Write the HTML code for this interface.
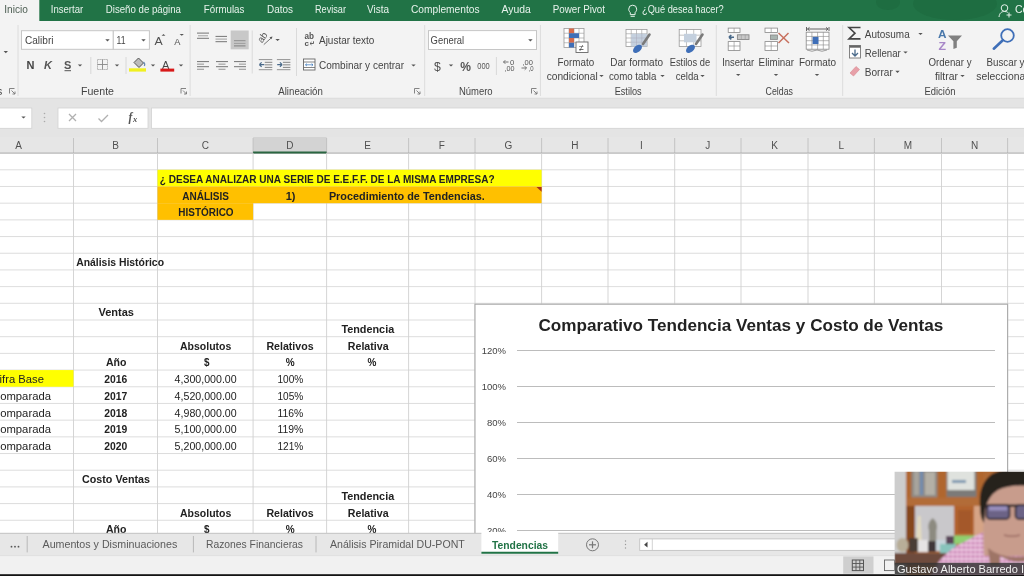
<!DOCTYPE html>
<html><head><meta charset="utf-8"><title>Excel - Tendencias</title>
<style>
html,body{margin:0;padding:0;width:1024px;height:576px;overflow:hidden;background:#fff}
svg{display:block;font-family:"Liberation Sans",sans-serif;will-change:transform}
</style></head><body>
<svg width="1024" height="576" viewBox="0 0 1024 576">
<rect x="0.00" y="0.00" width="1024.00" height="576.00" fill="#ffffff" />
<rect x="0.00" y="0.00" width="1024.00" height="21.00" fill="#217346" />
<rect x="0.00" y="0.00" width="39.30" height="21.00" fill="#f3f3f3" />
<ellipse cx="955" cy="4" rx="42" ry="16" fill="#1e6b40" opacity="0.8"/>
<ellipse cx="888" cy="2" rx="12" ry="8" fill="#1e6b40" opacity="0.8"/>
<text x="4.30" y="12.80" font-size="10.5" fill="#4d5e53" textLength="23.60" lengthAdjust="spacingAndGlyphs">Inicio</text>
<text x="50.80" y="12.80" font-size="10.5" fill="#e8f3ec" textLength="32.40" lengthAdjust="spacingAndGlyphs">Insertar</text>
<text x="105.80" y="12.80" font-size="10.5" fill="#e8f3ec" textLength="75.20" lengthAdjust="spacingAndGlyphs">Diseño de página</text>
<text x="203.80" y="12.80" font-size="10.5" fill="#e8f3ec" textLength="40.60" lengthAdjust="spacingAndGlyphs">Fórmulas</text>
<text x="267.00" y="12.80" font-size="10.5" fill="#e8f3ec" textLength="26.00" lengthAdjust="spacingAndGlyphs">Datos</text>
<text x="315.00" y="12.80" font-size="10.5" fill="#e8f3ec" textLength="31.00" lengthAdjust="spacingAndGlyphs">Revisar</text>
<text x="367.00" y="12.80" font-size="10.5" fill="#e8f3ec" textLength="22.00" lengthAdjust="spacingAndGlyphs">Vista</text>
<text x="411.00" y="12.80" font-size="10.5" fill="#e8f3ec" textLength="68.50" lengthAdjust="spacingAndGlyphs">Complementos</text>
<text x="501.50" y="12.80" font-size="10.5" fill="#e8f3ec" textLength="29.30" lengthAdjust="spacingAndGlyphs">Ayuda</text>
<text x="552.70" y="12.80" font-size="10.5" fill="#e8f3ec" textLength="52.30" lengthAdjust="spacingAndGlyphs">Power Pivot</text>
<text x="642.00" y="12.80" font-size="10.5" fill="#e8f3ec" textLength="81.60" lengthAdjust="spacingAndGlyphs">¿Qué desea hacer?</text>
<path d="M632.7 5.2 a4 4 0 0 1 4 4 c0 1.6 -1 2.6 -1.6 3.4 v2 h-4.8 v-2 c-0.6 -0.8 -1.6 -1.8 -1.6 -3.4 a4 4 0 0 1 4 -4z M630.6 16.3 h4.2" fill="none" stroke="#e8f3ec" stroke-width="1"/>
<circle cx="1004.5" cy="8" r="3.3" fill="none" stroke="#e8f3ec" stroke-width="1"/>
<path d="M999 17 c0.5 -4 2.5 -5.5 5.5 -5.5 c1.5 0 2.5 0.3 3.3 0.9 M1009 12.5 v5 M1006.5 15 h5" fill="none" stroke="#e8f3ec" stroke-width="1"/>
<text x="1015.00" y="12.80" font-size="10.5" fill="#e8f3ec">Co</text>
<rect x="0.00" y="21.00" width="1024.00" height="77.30" fill="#f3f3f3" />
<line x1="0.00" y1="98.30" x2="1024.00" y2="98.30" stroke="#d4d4d4" stroke-width="1" />
<line x1="18.00" y1="25.00" x2="18.00" y2="96.00" stroke="#dcdcdc" stroke-width="1" />
<line x1="190.10" y1="25.00" x2="190.10" y2="96.00" stroke="#dcdcdc" stroke-width="1" />
<line x1="424.70" y1="25.00" x2="424.70" y2="96.00" stroke="#dcdcdc" stroke-width="1" />
<line x1="540.40" y1="25.00" x2="540.40" y2="96.00" stroke="#dcdcdc" stroke-width="1" />
<line x1="716.30" y1="25.00" x2="716.30" y2="96.00" stroke="#dcdcdc" stroke-width="1" />
<line x1="842.70" y1="25.00" x2="842.70" y2="96.00" stroke="#dcdcdc" stroke-width="1" />
<text x="81.00" y="95.20" font-size="10.5" fill="#444" textLength="33.00" lengthAdjust="spacingAndGlyphs">Fuente</text>
<text x="278.30" y="95.20" font-size="10.5" fill="#444" textLength="44.50" lengthAdjust="spacingAndGlyphs">Alineación</text>
<text x="458.90" y="95.20" font-size="10.5" fill="#444" textLength="33.70" lengthAdjust="spacingAndGlyphs">Número</text>
<text x="614.70" y="95.20" font-size="10.5" fill="#444" textLength="26.90" lengthAdjust="spacingAndGlyphs">Estilos</text>
<text x="765.60" y="95.20" font-size="10.5" fill="#444" textLength="27.40" lengthAdjust="spacingAndGlyphs">Celdas</text>
<text x="924.50" y="95.20" font-size="10.5" fill="#444" textLength="30.90" lengthAdjust="spacingAndGlyphs">Edición</text>
<path d="M9.5 93.5 v-5 h5 M11.5 90.5 l3.5 3.5 M15.0 91.5 v2.5 h-2.5" fill="none" stroke="#777" stroke-width="0.9"/>
<path d="M181.0 93.5 v-5 h5 M183.0 90.5 l3.5 3.5 M186.5 91.5 v2.5 h-2.5" fill="none" stroke="#777" stroke-width="0.9"/>
<path d="M414.5 93.5 v-5 h5 M416.5 90.5 l3.5 3.5 M420.0 91.5 v2.5 h-2.5" fill="none" stroke="#777" stroke-width="0.9"/>
<path d="M531.5 93.5 v-5 h5 M533.5 90.5 l3.5 3.5 M537.0 91.5 v2.5 h-2.5" fill="none" stroke="#777" stroke-width="0.9"/>
<text x="-3.00" y="95.20" font-size="10.5" fill="#444">s</text>
<path d="M3.6 51.1 h4.4 l-2.2 2.2z" fill="#555"/>
<rect x="21.50" y="30.70" width="91.80" height="18.60" fill="#ffffff" stroke="#c6c6c6" stroke-width="1"/>
<rect x="113.30" y="30.70" width="36.10" height="18.60" fill="#ffffff" stroke="#c6c6c6" stroke-width="1"/>
<text x="25.00" y="44.00" font-size="10.5" fill="#444" textLength="28.50" lengthAdjust="spacingAndGlyphs">Calibri</text>
<text x="116.50" y="44.00" font-size="10.5" fill="#444" textLength="9.00" lengthAdjust="spacingAndGlyphs">11</text>
<path d="M105.3 39.2 h4.4 l-2.2 2.2z" fill="#555"/>
<path d="M141.3 39.2 h4.4 l-2.2 2.2z" fill="#555"/>
<text x="154.60" y="44.50" font-size="11.5" fill="#505050" textLength="8.20" lengthAdjust="spacingAndGlyphs">A</text>
<path d="M161.6 35.8 l1.9 -1.8 l1.9 1.8z" fill="#555"/>
<text x="174.20" y="44.50" font-size="9.8" fill="#505050" textLength="6.20" lengthAdjust="spacingAndGlyphs">A</text>
<path d="M179.6 34 h4.3 l-2.15 1.8z" fill="#555"/>
<text x="26.50" y="68.70" font-size="11" fill="#444" font-weight="bold">N</text>
<text x="44.00" y="68.70" font-size="11" fill="#555" font-weight="bold" font-style="italic">K</text>
<text x="64.00" y="68.70" font-size="11" fill="#555" font-weight="bold">S</text>
<line x1="64.50" y1="70.70" x2="71.00" y2="70.70" stroke="#555" stroke-width="1" />
<path d="M77.8 64.4 h4.4 l-2.2 2.2z" fill="#555"/>
<line x1="90.80" y1="57.00" x2="90.80" y2="74.00" stroke="#d8d8d8" stroke-width="1" />
<rect x="97.5" y="59.5" width="10" height="10" fill="none" stroke="#999" stroke-width="0.9" stroke-dasharray="1.2 0.8"/>
<line x1="102.50" y1="59.50" x2="102.50" y2="69.50" stroke="#888" stroke-width="0.9" />
<line x1="97.50" y1="64.50" x2="107.50" y2="64.50" stroke="#888" stroke-width="0.9" />
<path d="M114.8 64.4 h4.4 l-2.2 2.2z" fill="#555"/>
<line x1="126.00" y1="57.00" x2="126.00" y2="74.00" stroke="#d8d8d8" stroke-width="1" />
<path d="M134 62.5 l4.5 -4.5 l5 5 l-4.5 4.5z" fill="#bbb" stroke="#555" stroke-width="1"/>
<path d="M143.5 62 q2 2 0.8 4" fill="none" stroke="#6a8ab0" stroke-width="1.2"/>
<rect x="129.00" y="68.30" width="17.00" height="3.30" fill="#f0f020" />
<path d="M150.8 64.4 h4.4 l-2.2 2.2z" fill="#555"/>
<text x="162.00" y="68.80" font-size="11" fill="#444">A</text>
<rect x="160.40" y="68.60" width="13.80" height="3.00" fill="#d81818" />
<path d="M178.8 64.4 h4.4 l-2.2 2.2z" fill="#555"/>
<line x1="197.00" y1="33.10" x2="209.00" y2="33.10" stroke="#666" stroke-width="0.9" />
<line x1="198.00" y1="35.80" x2="208.00" y2="35.80" stroke="#999" stroke-width="0.9" />
<line x1="197.00" y1="38.30" x2="209.00" y2="38.30" stroke="#666" stroke-width="0.9" />
<line x1="215.50" y1="36.40" x2="227.00" y2="36.40" stroke="#666" stroke-width="0.9" />
<line x1="215.50" y1="39.10" x2="227.00" y2="39.10" stroke="#999" stroke-width="0.9" />
<line x1="215.50" y1="41.70" x2="227.00" y2="41.70" stroke="#666" stroke-width="0.9" />
<rect x="230.70" y="30.50" width="18.00" height="18.80" fill="#c8c8c8" />
<line x1="234.00" y1="40.70" x2="245.50" y2="40.70" stroke="#888" stroke-width="0.9" />
<line x1="234.00" y1="43.40" x2="245.50" y2="43.40" stroke="#999" stroke-width="0.9" />
<line x1="234.00" y1="45.90" x2="245.50" y2="45.90" stroke="#777" stroke-width="0.9" />
<line x1="252.20" y1="30.50" x2="252.20" y2="73.50" stroke="#dadada" stroke-width="1" />
<text x="262.50" y="40.50" font-size="9.5" fill="#555" text-anchor="middle" transform="rotate(-55 262.5 37.5)">ab</text>
<path d="M263.8 44.6 l7.6 -6.8" stroke="#666" stroke-width="0.9" fill="none"/>
<path d="M272.5 36.6 l-3 0.6 l2 2z" fill="#555"/>
<path d="M275.4 38.9 h4.4 l-2.2 2.2z" fill="#555"/>
<line x1="296.50" y1="28.00" x2="296.50" y2="76.00" stroke="#dadada" stroke-width="1" />
<text x="304.50" y="38.50" font-size="8.5" fill="#555" font-weight="bold" textLength="9.50" lengthAdjust="spacingAndGlyphs">ab</text>
<text x="304.50" y="45.50" font-size="8" fill="#555" font-weight="bold">c</text>
<path d="M310 43.5 h3.5 v-2.2 M310 43.5 l1.5 -1.4 M310 43.5 l1.5 1.4" stroke="#555" stroke-width="0.9" fill="none"/>
<text x="319.00" y="44.20" font-size="10.5" fill="#444" textLength="55.40" lengthAdjust="spacingAndGlyphs">Ajustar texto</text>
<line x1="197.00" y1="61.60" x2="209.00" y2="61.60" stroke="#666" stroke-width="0.9" />
<line x1="197.00" y1="64.15" x2="204.00" y2="64.15" stroke="#888" stroke-width="0.9" />
<line x1="197.00" y1="66.70" x2="209.00" y2="66.70" stroke="#666" stroke-width="0.9" />
<line x1="197.00" y1="69.25" x2="204.00" y2="69.25" stroke="#888" stroke-width="0.9" />
<line x1="216.00" y1="61.60" x2="228.00" y2="61.60" stroke="#666" stroke-width="0.9" />
<line x1="218.50" y1="64.15" x2="225.50" y2="64.15" stroke="#888" stroke-width="0.9" />
<line x1="216.00" y1="66.70" x2="228.00" y2="66.70" stroke="#666" stroke-width="0.9" />
<line x1="218.50" y1="69.25" x2="225.50" y2="69.25" stroke="#888" stroke-width="0.9" />
<line x1="234.00" y1="61.60" x2="246.00" y2="61.60" stroke="#666" stroke-width="0.9" />
<line x1="239.00" y1="64.15" x2="246.00" y2="64.15" stroke="#888" stroke-width="0.9" />
<line x1="234.00" y1="66.70" x2="246.00" y2="66.70" stroke="#666" stroke-width="0.9" />
<line x1="239.00" y1="69.25" x2="246.00" y2="69.25" stroke="#888" stroke-width="0.9" />
<line x1="258.80" y1="59.60" x2="272.30" y2="59.60" stroke="#888" stroke-width="0.9" />
<line x1="264.80" y1="62.30" x2="272.30" y2="62.30" stroke="#777" stroke-width="0.9" />
<line x1="264.80" y1="64.85" x2="272.30" y2="64.85" stroke="#777" stroke-width="0.9" />
<line x1="264.80" y1="67.40" x2="272.30" y2="67.40" stroke="#777" stroke-width="0.9" />
<line x1="258.80" y1="69.70" x2="272.30" y2="69.70" stroke="#888" stroke-width="0.9" />
<path d="M264.3 64.6 h-5 M259.3 64.6 l2.3 -2.2 M259.3 64.6 l2.3 2.2" stroke="#4a6a8a" stroke-width="1.2" fill="none"/>
<line x1="276.90" y1="59.60" x2="290.40" y2="59.60" stroke="#888" stroke-width="0.9" />
<line x1="282.90" y1="62.30" x2="290.40" y2="62.30" stroke="#777" stroke-width="0.9" />
<line x1="282.90" y1="64.85" x2="290.40" y2="64.85" stroke="#777" stroke-width="0.9" />
<line x1="282.90" y1="67.40" x2="290.40" y2="67.40" stroke="#777" stroke-width="0.9" />
<line x1="276.90" y1="69.70" x2="290.40" y2="69.70" stroke="#888" stroke-width="0.9" />
<path d="M277.2 64.6 h5 M282.2 64.6 l-2.3 -2.2 M282.2 64.6 l-2.3 2.2" stroke="#4a6a8a" stroke-width="1.2" fill="none"/>
<rect x="303.5" y="59" width="11.5" height="11" fill="#fff" stroke="#666" stroke-width="0.9"/>
<line x1="303.50" y1="62.00" x2="315.00" y2="62.00" stroke="#666" stroke-width="0.8" />
<line x1="303.50" y1="67.50" x2="315.00" y2="67.50" stroke="#666" stroke-width="0.8" />
<path d="M305.5 64.8 h7.5 M305.5 64.8 l1.4 -1.2 M305.5 64.8 l1.4 1.2 M313 64.8 l-1.4 -1.2 M313 64.8 l-1.4 1.2" stroke="#2d6fb7" stroke-width="0.7" fill="none"/>
<text x="319.00" y="69.00" font-size="10.5" fill="#444" textLength="85.00" lengthAdjust="spacingAndGlyphs">Combinar y centrar</text>
<path d="M411.3 64.4 h4.4 l-2.2 2.2z" fill="#555"/>
<rect x="428.50" y="30.60" width="108.00" height="18.90" fill="#ffffff" stroke="#c6c6c6" stroke-width="1"/>
<text x="430.60" y="44.00" font-size="10.5" fill="#444" textLength="33.50" lengthAdjust="spacingAndGlyphs">General</text>
<path d="M528.2 39.2 h4.4 l-2.2 2.2z" fill="#555"/>
<text x="434.00" y="70.50" font-size="13" fill="#505050" textLength="6.80" lengthAdjust="spacingAndGlyphs">$</text>
<path d="M448.8 64.4 h4.4 l-2.2 2.2z" fill="#555"/>
<text x="460.30" y="70.50" font-size="12" fill="#555" font-weight="bold" textLength="10.70" lengthAdjust="spacingAndGlyphs">%</text>
<text x="477.30" y="69.00" font-size="9" fill="#555" textLength="12.50" lengthAdjust="spacingAndGlyphs">000</text>
<line x1="496.40" y1="57.00" x2="496.40" y2="75.00" stroke="#d8d8d8" stroke-width="1" />
<text x="510.00" y="64.50" font-size="7.5" fill="#555" textLength="4.30" lengthAdjust="spacingAndGlyphs">0</text>
<text x="504.50" y="70.50" font-size="7.5" fill="#555" textLength="10.00" lengthAdjust="spacingAndGlyphs">,00</text>
<path d="M503.5 62 h5 M503.5 62 l1.8 -1.8 M503.5 62 l1.8 1.8" stroke="#666" stroke-width="0.9" fill="none"/>
<text x="522.50" y="64.50" font-size="7.5" fill="#555" textLength="10.50" lengthAdjust="spacingAndGlyphs">,00</text>
<text x="528.50" y="70.50" font-size="7.5" fill="#555" textLength="5.00" lengthAdjust="spacingAndGlyphs">,0</text>
<path d="M521.5 68 h5 M526.5 68 l-1.8 -1.8 M526.5 68 l-1.8 1.8" stroke="#666" stroke-width="0.9" fill="none"/>
<rect x="564" y="28.5" width="20" height="19" fill="#fff" stroke="#999" stroke-width="0.8"/>
<line x1="569.00" y1="28.50" x2="569.00" y2="47.50" stroke="#999" stroke-width="0.6" />
<line x1="574.00" y1="28.50" x2="574.00" y2="47.50" stroke="#999" stroke-width="0.6" />
<line x1="579.00" y1="28.50" x2="579.00" y2="47.50" stroke="#999" stroke-width="0.6" />
<line x1="564.00" y1="33.25" x2="584.00" y2="33.25" stroke="#999" stroke-width="0.6" />
<line x1="564.00" y1="38.00" x2="584.00" y2="38.00" stroke="#999" stroke-width="0.6" />
<line x1="564.00" y1="42.75" x2="584.00" y2="42.75" stroke="#999" stroke-width="0.6" />
<rect x="569.00" y="28.50" width="5.00" height="5.00" fill="#d76a4a" />
<rect x="569.00" y="33.25" width="10.00" height="4.75" fill="#3f6fb8" />
<rect x="569.00" y="38.00" width="5.00" height="4.75" fill="#d76a4a" />
<rect x="569.00" y="42.75" width="5.00" height="4.75" fill="#3f6fb8" />
<rect x="576" y="42" width="12" height="10.5" fill="#fff" stroke="#666" stroke-width="0.9"/>
<text x="579.00" y="50.50" font-size="9" fill="#444">≠</text>
<text x="557.60" y="65.80" font-size="10.5" fill="#444" textLength="36.50" lengthAdjust="spacingAndGlyphs">Formato</text>
<text x="546.70" y="79.50" font-size="10.5" fill="#444" textLength="51.00" lengthAdjust="spacingAndGlyphs">condicional</text>
<path d="M599.3 74.9 h4.4 l-2.2 2.2z" fill="#555"/>
<rect x="626" y="29.5" width="21" height="17" fill="#fff" stroke="#999" stroke-width="0.8"/>
<line x1="631.25" y1="29.50" x2="631.25" y2="46.50" stroke="#999" stroke-width="0.6" />
<line x1="636.50" y1="29.50" x2="636.50" y2="46.50" stroke="#999" stroke-width="0.6" />
<line x1="641.75" y1="29.50" x2="641.75" y2="46.50" stroke="#999" stroke-width="0.6" />
<line x1="626.00" y1="33.75" x2="647.00" y2="33.75" stroke="#999" stroke-width="0.6" />
<line x1="626.00" y1="38.00" x2="647.00" y2="38.00" stroke="#999" stroke-width="0.6" />
<line x1="626.00" y1="42.25" x2="647.00" y2="42.25" stroke="#999" stroke-width="0.6" />
<rect x="631.30" y="33.80" width="15.70" height="12.70" fill="#c4d0de" />
<line x1="636.50" y1="33.80" x2="636.50" y2="46.50" stroke="#aab" stroke-width="0.5" />
<line x1="641.80" y1="33.80" x2="641.80" y2="46.50" stroke="#aab" stroke-width="0.5" />
<line x1="631.30" y1="38.00" x2="647.00" y2="38.00" stroke="#aab" stroke-width="0.5" />
<line x1="631.30" y1="42.20" x2="647.00" y2="42.20" stroke="#aab" stroke-width="0.5" />
<path d="M643 44 l6.5 -9.5" stroke="#7a7a7a" stroke-width="2.6" stroke-linecap="round"/>
<ellipse cx="637.5" cy="48.8" rx="5.2" ry="3.2" transform="rotate(-40 637.5 48.8)" fill="#3f6fb8"/>
<text x="610.30" y="65.80" font-size="10.5" fill="#444" textLength="52.70" lengthAdjust="spacingAndGlyphs">Dar formato</text>
<text x="608.90" y="79.50" font-size="10.5" fill="#444" textLength="47.50" lengthAdjust="spacingAndGlyphs">como tabla</text>
<path d="M660.3 74.9 h4.4 l-2.2 2.2z" fill="#555"/>
<rect x="679.2" y="29.5" width="21.8" height="17" fill="#fff" stroke="#999" stroke-width="0.8"/>
<line x1="686.47" y1="29.50" x2="686.47" y2="46.50" stroke="#999" stroke-width="0.6" />
<line x1="693.73" y1="29.50" x2="693.73" y2="46.50" stroke="#999" stroke-width="0.6" />
<line x1="679.20" y1="35.17" x2="701.00" y2="35.17" stroke="#999" stroke-width="0.6" />
<line x1="679.20" y1="40.83" x2="701.00" y2="40.83" stroke="#999" stroke-width="0.6" />
<rect x="684.00" y="33.80" width="12.50" height="8.50" fill="#c4d0de" />
<path d="M696 44 l6.5 -9.5" stroke="#7a7a7a" stroke-width="2.6" stroke-linecap="round"/>
<ellipse cx="690.5" cy="48.8" rx="5.2" ry="3.2" transform="rotate(-40 690.5 48.8)" fill="#3f6fb8"/>
<text x="669.70" y="65.80" font-size="10.5" fill="#444" textLength="40.40" lengthAdjust="spacingAndGlyphs">Estilos de</text>
<text x="675.70" y="79.50" font-size="10.5" fill="#444" textLength="23.00" lengthAdjust="spacingAndGlyphs">celda</text>
<path d="M700.3 74.9 h4.4 l-2.2 2.2z" fill="#555"/>
<rect x="728.2" y="28.1" width="11.8" height="4.3" fill="#fff" stroke="#888" stroke-width="0.8"/>
<line x1="734.10" y1="28.10" x2="734.10" y2="32.40" stroke="#888" stroke-width="0.6" />
<path d="M729 37.2 h5 M729 37.2 l2.3 -2.2 M729 37.2 l2.3 2.2" stroke="#4a6a8a" stroke-width="1.6" fill="none"/>
<rect x="737.4" y="34.8" width="11.6" height="4.7" fill="#c8c8c8" stroke="#888" stroke-width="0.9"/>
<line x1="741.30" y1="34.80" x2="741.30" y2="39.50" stroke="#999" stroke-width="0.6" />
<line x1="745.20" y1="34.80" x2="745.20" y2="39.50" stroke="#999" stroke-width="0.6" />
<rect x="728.2" y="41.6" width="11.8" height="8.8" fill="#fff" stroke="#888" stroke-width="0.8"/>
<line x1="734.10" y1="41.60" x2="734.10" y2="50.40" stroke="#888" stroke-width="0.6" />
<line x1="728.20" y1="46.00" x2="740.00" y2="46.00" stroke="#888" stroke-width="0.6" />
<text x="722.20" y="65.80" font-size="10.5" fill="#444" textLength="32.00" lengthAdjust="spacingAndGlyphs">Insertar</text>
<path d="M736.0 73.9 h4.4 l-2.2 2.2z" fill="#555"/>
<rect x="765" y="28.1" width="12.4" height="4.3" fill="#fff" stroke="#888" stroke-width="0.8"/>
<line x1="771.20" y1="28.10" x2="771.20" y2="32.40" stroke="#888" stroke-width="0.6" />
<rect x="770.4" y="35" width="7" height="4.5" fill="#a8b4b0" stroke="#888" stroke-width="0.8"/>
<rect x="765" y="41.6" width="12.4" height="8.8" fill="#fff" stroke="#888" stroke-width="0.8"/>
<line x1="771.20" y1="41.60" x2="771.20" y2="50.40" stroke="#888" stroke-width="0.6" />
<line x1="765.00" y1="46.00" x2="777.40" y2="46.00" stroke="#888" stroke-width="0.6" />
<path d="M778.5 33 l10.5 10 M788.5 33 l-10 10" stroke="#c8705e" stroke-width="1.5"/>
<text x="758.60" y="65.80" font-size="10.5" fill="#444" textLength="35.40" lengthAdjust="spacingAndGlyphs">Eliminar</text>
<path d="M773.8 73.9 h4.4 l-2.2 2.2z" fill="#555"/>
<rect x="806.2" y="32.2" width="22.8" height="17" fill="#fff" stroke="#888" stroke-width="0.8"/>
<line x1="811.90" y1="32.20" x2="811.90" y2="49.20" stroke="#888" stroke-width="0.6" />
<line x1="817.60" y1="32.20" x2="817.60" y2="49.20" stroke="#888" stroke-width="0.6" />
<line x1="823.30" y1="32.20" x2="823.30" y2="49.20" stroke="#888" stroke-width="0.6" />
<line x1="806.20" y1="36.45" x2="829.00" y2="36.45" stroke="#888" stroke-width="0.6" />
<line x1="806.20" y1="40.70" x2="829.00" y2="40.70" stroke="#888" stroke-width="0.6" />
<line x1="806.20" y1="44.95" x2="829.00" y2="44.95" stroke="#888" stroke-width="0.6" />
<rect x="812.60" y="36.90" width="5.90" height="7.10" fill="#3f6fb8" />
<path d="M807.5 29 h20.5 M807.5 29 l2 -1.6 M807.5 29 l2 1.6 M828 29 l-2 -1.6 M828 29 l-2 1.6 M806.5 27 v4 M829 27 v4" stroke="#555" stroke-width="0.9" fill="none"/>
<path d="M807 50 q5 2.5 10 0 q5 2.5 10 0" stroke="#888" stroke-width="0.8" fill="none"/>
<text x="798.90" y="65.80" font-size="10.5" fill="#444" textLength="37.20" lengthAdjust="spacingAndGlyphs">Formato</text>
<path d="M814.8 73.9 h4.4 l-2.2 2.2z" fill="#555"/>
<path d="M860.5 27.5 h-11.5 l6 5.7 l-6 5.7 h11.5" fill="none" stroke="#444" stroke-width="1.6"/>
<text x="864.80" y="37.80" font-size="10.5" fill="#444" textLength="44.90" lengthAdjust="spacingAndGlyphs">Autosuma</text>
<path d="M918.3 32.9 h4.4 l-2.2 2.2z" fill="#555"/>
<rect x="849.5" y="45.5" width="11" height="12.5" fill="#fff" stroke="#777" stroke-width="0.9"/>
<rect x="849.50" y="45.50" width="11.00" height="2.20" fill="#666" />
<path d="M855 49.5 v6.5 M852 53 l3 3 l3 -3" stroke="#4a6a8a" stroke-width="1.3" fill="none"/>
<text x="864.80" y="56.70" font-size="10.5" fill="#444" textLength="36.00" lengthAdjust="spacingAndGlyphs">Rellenar</text>
<path d="M903.3 51.4 h4.4 l-2.2 2.2z" fill="#555"/>
<path d="M850 73 l6 -6.5 l3.5 3 l-6 6.5z" fill="#e7a0a8" stroke="#d98891" stroke-width="0.6"/>
<text x="864.80" y="75.90" font-size="10.5" fill="#444" textLength="28.00" lengthAdjust="spacingAndGlyphs">Borrar</text>
<path d="M895.3 70.7 h4.4 l-2.2 2.2z" fill="#555"/>
<text x="938.00" y="37.50" font-size="10.5" fill="#4a78aa" font-weight="bold" textLength="8.50" lengthAdjust="spacingAndGlyphs">A</text>
<text x="938.50" y="49.50" font-size="10" fill="#a888c8" font-weight="bold" textLength="7.50" lengthAdjust="spacingAndGlyphs">Z</text>
<path d="M948 35.5 h14 l-5.2 5.8 v6.5 l-3.4 1.3 v-7.8z" fill="#808080"/>
<text x="928.40" y="65.80" font-size="10.5" fill="#444" textLength="43.10" lengthAdjust="spacingAndGlyphs">Ordenar y</text>
<text x="934.90" y="79.50" font-size="10.5" fill="#444" textLength="23.00" lengthAdjust="spacingAndGlyphs">filtrar</text>
<path d="M960.3 74.9 h4.4 l-2.2 2.2z" fill="#555"/>
<circle cx="1007.5" cy="35.5" r="6.3" fill="none" stroke="#3f6fb8" stroke-width="1.8"/>
<path d="M1002.8 40.2 l-9 8.5" stroke="#3f6fb8" stroke-width="2.6" stroke-linecap="round"/>
<text x="986.50" y="65.80" font-size="10.5" fill="#444" textLength="38.00" lengthAdjust="spacingAndGlyphs">Buscar y</text>
<text x="976.20" y="79.50" font-size="10.5" fill="#444" textLength="52.50" lengthAdjust="spacingAndGlyphs">seleccionar</text>
<rect x="0.00" y="98.80" width="1024.00" height="38.20" fill="#e4e4e4" />
<rect x="-1.00" y="108.00" width="32.80" height="20.30" fill="#ffffff" stroke="#d2d2d2" stroke-width="0.8"/>
<path d="M21.3 116.4 h4.4 l-2.2 2.2z" fill="#555"/>
<circle cx="44.5" cy="113.5" r="0.8" fill="#aaa"/>
<circle cx="44.5" cy="117.5" r="0.8" fill="#aaa"/>
<circle cx="44.5" cy="121.5" r="0.8" fill="#aaa"/>
<rect x="58.00" y="108.00" width="90.00" height="20.30" fill="#ffffff" stroke="#d2d2d2" stroke-width="0.8"/>
<path d="M69 114 l7 7 M76 114 l-7 7" stroke="#b0b0b0" stroke-width="1.3"/>
<path d="M98.5 118.5 l3 3 l6.5 -6.5" stroke="#b0b0b0" stroke-width="1.3" fill="none"/>
<text x="128.50" y="121.20" font-size="11.5" fill="#555" font-weight="bold" font-family="Liberation Serif" font-style="italic">f</text>
<text x="133.00" y="122.20" font-size="8.5" fill="#555" font-weight="bold" font-family="Liberation Serif" font-style="italic">x</text>
<rect x="151.50" y="108.00" width="874.00" height="20.30" fill="#ffffff" stroke="#d2d2d2" stroke-width="0.8"/>
<rect x="0.00" y="137.00" width="1024.00" height="16.10" fill="#e6e6e6" />
<rect x="253.10" y="137.00" width="73.50" height="16.10" fill="#d3d3d3" />
<line x1="73.50" y1="138.00" x2="73.50" y2="153.10" stroke="#c0c0c0" stroke-width="0.9" />
<line x1="157.50" y1="138.00" x2="157.50" y2="153.10" stroke="#c0c0c0" stroke-width="0.9" />
<line x1="253.10" y1="138.00" x2="253.10" y2="153.10" stroke="#c0c0c0" stroke-width="0.9" />
<line x1="326.60" y1="138.00" x2="326.60" y2="153.10" stroke="#c0c0c0" stroke-width="0.9" />
<line x1="408.60" y1="138.00" x2="408.60" y2="153.10" stroke="#c0c0c0" stroke-width="0.9" />
<line x1="475.00" y1="138.00" x2="475.00" y2="153.10" stroke="#c0c0c0" stroke-width="0.9" />
<line x1="541.60" y1="138.00" x2="541.60" y2="153.10" stroke="#c0c0c0" stroke-width="0.9" />
<line x1="608.00" y1="138.00" x2="608.00" y2="153.10" stroke="#c0c0c0" stroke-width="0.9" />
<line x1="674.70" y1="138.00" x2="674.70" y2="153.10" stroke="#c0c0c0" stroke-width="0.9" />
<line x1="741.00" y1="138.00" x2="741.00" y2="153.10" stroke="#c0c0c0" stroke-width="0.9" />
<line x1="808.00" y1="138.00" x2="808.00" y2="153.10" stroke="#c0c0c0" stroke-width="0.9" />
<line x1="874.40" y1="138.00" x2="874.40" y2="153.10" stroke="#c0c0c0" stroke-width="0.9" />
<line x1="941.50" y1="138.00" x2="941.50" y2="153.10" stroke="#c0c0c0" stroke-width="0.9" />
<line x1="1007.60" y1="138.00" x2="1007.60" y2="153.10" stroke="#c0c0c0" stroke-width="0.9" />
<line x1="1075.00" y1="138.00" x2="1075.00" y2="153.10" stroke="#c0c0c0" stroke-width="0.9" />
<line x1="0.00" y1="153.10" x2="1024.00" y2="153.10" stroke="#a8a8a8" stroke-width="1" />
<line x1="253.10" y1="152.60" x2="326.60" y2="152.60" stroke="#2a6642" stroke-width="2" />
<text x="18.50" y="149.00" font-size="10" fill="#505050" text-anchor="middle">A</text>
<text x="115.50" y="149.00" font-size="10" fill="#505050" text-anchor="middle">B</text>
<text x="205.30" y="149.00" font-size="10" fill="#505050" text-anchor="middle">C</text>
<text x="289.85" y="149.00" font-size="10" fill="#505050" text-anchor="middle">D</text>
<text x="367.60" y="149.00" font-size="10" fill="#505050" text-anchor="middle">E</text>
<text x="441.80" y="149.00" font-size="10" fill="#505050" text-anchor="middle">F</text>
<text x="508.30" y="149.00" font-size="10" fill="#505050" text-anchor="middle">G</text>
<text x="574.80" y="149.00" font-size="10" fill="#505050" text-anchor="middle">H</text>
<text x="641.35" y="149.00" font-size="10" fill="#505050" text-anchor="middle">I</text>
<text x="707.85" y="149.00" font-size="10" fill="#505050" text-anchor="middle">J</text>
<text x="774.50" y="149.00" font-size="10" fill="#505050" text-anchor="middle">K</text>
<text x="841.20" y="149.00" font-size="10" fill="#505050" text-anchor="middle">L</text>
<text x="907.95" y="149.00" font-size="10" fill="#505050" text-anchor="middle">M</text>
<text x="974.55" y="149.00" font-size="10" fill="#505050" text-anchor="middle">N</text>
<text x="1041.30" y="149.00" font-size="10" fill="#505050" text-anchor="middle">O</text>
<line x1="0.00" y1="169.79" x2="1024.00" y2="169.79" stroke="#d9d9d9" stroke-width="0.9" />
<line x1="0.00" y1="186.48" x2="1024.00" y2="186.48" stroke="#d9d9d9" stroke-width="0.9" />
<line x1="0.00" y1="203.17" x2="1024.00" y2="203.17" stroke="#d9d9d9" stroke-width="0.9" />
<line x1="0.00" y1="219.86" x2="1024.00" y2="219.86" stroke="#d9d9d9" stroke-width="0.9" />
<line x1="0.00" y1="236.55" x2="1024.00" y2="236.55" stroke="#d9d9d9" stroke-width="0.9" />
<line x1="0.00" y1="253.24" x2="1024.00" y2="253.24" stroke="#d9d9d9" stroke-width="0.9" />
<line x1="0.00" y1="269.93" x2="1024.00" y2="269.93" stroke="#d9d9d9" stroke-width="0.9" />
<line x1="0.00" y1="286.62" x2="1024.00" y2="286.62" stroke="#d9d9d9" stroke-width="0.9" />
<line x1="0.00" y1="303.31" x2="1024.00" y2="303.31" stroke="#d9d9d9" stroke-width="0.9" />
<line x1="0.00" y1="320.00" x2="1024.00" y2="320.00" stroke="#d9d9d9" stroke-width="0.9" />
<line x1="0.00" y1="336.69" x2="1024.00" y2="336.69" stroke="#d9d9d9" stroke-width="0.9" />
<line x1="0.00" y1="353.38" x2="1024.00" y2="353.38" stroke="#d9d9d9" stroke-width="0.9" />
<line x1="0.00" y1="370.07" x2="1024.00" y2="370.07" stroke="#d9d9d9" stroke-width="0.9" />
<line x1="0.00" y1="386.76" x2="1024.00" y2="386.76" stroke="#d9d9d9" stroke-width="0.9" />
<line x1="0.00" y1="403.45" x2="1024.00" y2="403.45" stroke="#d9d9d9" stroke-width="0.9" />
<line x1="0.00" y1="420.14" x2="1024.00" y2="420.14" stroke="#d9d9d9" stroke-width="0.9" />
<line x1="0.00" y1="436.83" x2="1024.00" y2="436.83" stroke="#d9d9d9" stroke-width="0.9" />
<line x1="0.00" y1="453.52" x2="1024.00" y2="453.52" stroke="#d9d9d9" stroke-width="0.9" />
<line x1="0.00" y1="470.21" x2="1024.00" y2="470.21" stroke="#d9d9d9" stroke-width="0.9" />
<line x1="0.00" y1="486.90" x2="1024.00" y2="486.90" stroke="#d9d9d9" stroke-width="0.9" />
<line x1="0.00" y1="503.59" x2="1024.00" y2="503.59" stroke="#d9d9d9" stroke-width="0.9" />
<line x1="0.00" y1="520.28" x2="1024.00" y2="520.28" stroke="#d9d9d9" stroke-width="0.9" />
<line x1="0.00" y1="536.97" x2="1024.00" y2="536.97" stroke="#d9d9d9" stroke-width="0.9" />
<line x1="73.50" y1="153.10" x2="73.50" y2="533.00" stroke="#d0d0d0" stroke-width="0.9" />
<line x1="157.50" y1="153.10" x2="157.50" y2="533.00" stroke="#d0d0d0" stroke-width="0.9" />
<line x1="253.10" y1="153.10" x2="253.10" y2="533.00" stroke="#d0d0d0" stroke-width="0.9" />
<line x1="326.60" y1="153.10" x2="326.60" y2="533.00" stroke="#d0d0d0" stroke-width="0.9" />
<line x1="408.60" y1="153.10" x2="408.60" y2="533.00" stroke="#d0d0d0" stroke-width="0.9" />
<line x1="475.00" y1="153.10" x2="475.00" y2="533.00" stroke="#d0d0d0" stroke-width="0.9" />
<line x1="541.60" y1="153.10" x2="541.60" y2="533.00" stroke="#d0d0d0" stroke-width="0.9" />
<line x1="608.00" y1="153.10" x2="608.00" y2="533.00" stroke="#d0d0d0" stroke-width="0.9" />
<line x1="674.70" y1="153.10" x2="674.70" y2="533.00" stroke="#d0d0d0" stroke-width="0.9" />
<line x1="741.00" y1="153.10" x2="741.00" y2="533.00" stroke="#d0d0d0" stroke-width="0.9" />
<line x1="808.00" y1="153.10" x2="808.00" y2="533.00" stroke="#d0d0d0" stroke-width="0.9" />
<line x1="874.40" y1="153.10" x2="874.40" y2="533.00" stroke="#d0d0d0" stroke-width="0.9" />
<line x1="941.50" y1="153.10" x2="941.50" y2="533.00" stroke="#d0d0d0" stroke-width="0.9" />
<line x1="1007.60" y1="153.10" x2="1007.60" y2="533.00" stroke="#d0d0d0" stroke-width="0.9" />
<line x1="1075.00" y1="153.10" x2="1075.00" y2="533.00" stroke="#d0d0d0" stroke-width="0.9" />
<rect x="157.50" y="169.79" width="384.10" height="16.69" fill="#ffff00" />
<rect x="157.50" y="186.48" width="384.10" height="16.69" fill="#ffc000" />
<rect x="157.50" y="203.17" width="95.60" height="16.69" fill="#ffc000" />
<rect x="0.00" y="370.07" width="73.50" height="16.69" fill="#ffff00" />
<path d="M536.5 187 h5.1 v4.8z" fill="#a83218"/>
<text x="159.80" y="182.89" font-size="10.5" fill="#222" font-weight="bold" textLength="334.80" lengthAdjust="spacingAndGlyphs">¿ DESEA ANALIZAR UNA SERIE DE E.E.F.F. DE LA MISMA EMPRESA?</text>
<text x="182.20" y="199.58" font-size="10.5" fill="#222" font-weight="bold" textLength="46.80" lengthAdjust="spacingAndGlyphs">ANÁLISIS</text>
<text x="285.70" y="199.58" font-size="10.5" fill="#222" font-weight="bold" textLength="9.80" lengthAdjust="spacingAndGlyphs">1)</text>
<text x="328.90" y="199.58" font-size="10.5" fill="#222" font-weight="bold" textLength="155.90" lengthAdjust="spacingAndGlyphs">Procedimiento de Tendencias.</text>
<text x="178.30" y="216.27" font-size="10.5" fill="#222" font-weight="bold" textLength="55.30" lengthAdjust="spacingAndGlyphs">HISTÓRICO</text>
<text x="76.20" y="266.34" font-size="10.5" fill="#222" font-weight="bold" textLength="87.80" lengthAdjust="spacingAndGlyphs">Análisis Histórico</text>
<text x="98.40" y="316.41" font-size="10.5" fill="#222" font-weight="bold" textLength="35.60" lengthAdjust="spacingAndGlyphs">Ventas</text>
<text x="341.40" y="333.10" font-size="10.5" fill="#222" font-weight="bold" textLength="52.80" lengthAdjust="spacingAndGlyphs">Tendencia</text>
<text x="180.00" y="349.79" font-size="10.5" fill="#222" font-weight="bold" textLength="51.30" lengthAdjust="spacingAndGlyphs">Absolutos</text>
<text x="266.40" y="349.79" font-size="10.5" fill="#222" font-weight="bold" textLength="47.20" lengthAdjust="spacingAndGlyphs">Relativos</text>
<text x="347.80" y="349.79" font-size="10.5" fill="#222" font-weight="bold" textLength="40.80" lengthAdjust="spacingAndGlyphs">Relativa</text>
<text x="106.00" y="366.48" font-size="10.5" fill="#222" font-weight="bold" textLength="20.50" lengthAdjust="spacingAndGlyphs">Año</text>
<text x="204.00" y="366.48" font-size="10.5" fill="#222" font-weight="bold" textLength="5.50" lengthAdjust="spacingAndGlyphs">$</text>
<text x="285.80" y="366.48" font-size="10.5" fill="#222" font-weight="bold" textLength="8.90" lengthAdjust="spacingAndGlyphs">%</text>
<text x="367.50" y="366.48" font-size="10.5" fill="#222" font-weight="bold" textLength="8.90" lengthAdjust="spacingAndGlyphs">%</text>
<text x="-8.50" y="383.17" font-size="10.5" fill="#222" textLength="52.50" lengthAdjust="spacingAndGlyphs">Cifra Base</text>
<text x="-8.00" y="399.86" font-size="10.5" fill="#222" textLength="59.00" lengthAdjust="spacingAndGlyphs">Comparada</text>
<text x="-8.00" y="416.55" font-size="10.5" fill="#222" textLength="59.00" lengthAdjust="spacingAndGlyphs">Comparada</text>
<text x="-8.00" y="433.24" font-size="10.5" fill="#222" textLength="59.00" lengthAdjust="spacingAndGlyphs">Comparada</text>
<text x="-8.00" y="449.93" font-size="10.5" fill="#222" textLength="59.00" lengthAdjust="spacingAndGlyphs">Comparada</text>
<text x="104.30" y="383.17" font-size="10.5" fill="#222" font-weight="bold" textLength="23.00" lengthAdjust="spacingAndGlyphs">2016</text>
<text x="174.60" y="383.17" font-size="10.5" fill="#222" textLength="62.10" lengthAdjust="spacingAndGlyphs">4,300,000.00</text>
<text x="277.50" y="383.17" font-size="10.5" fill="#222" textLength="25.80" lengthAdjust="spacingAndGlyphs">100%</text>
<text x="104.30" y="399.86" font-size="10.5" fill="#222" font-weight="bold" textLength="23.00" lengthAdjust="spacingAndGlyphs">2017</text>
<text x="174.60" y="399.86" font-size="10.5" fill="#222" textLength="62.10" lengthAdjust="spacingAndGlyphs">4,520,000.00</text>
<text x="277.50" y="399.86" font-size="10.5" fill="#222" textLength="25.80" lengthAdjust="spacingAndGlyphs">105%</text>
<text x="104.30" y="416.55" font-size="10.5" fill="#222" font-weight="bold" textLength="23.00" lengthAdjust="spacingAndGlyphs">2018</text>
<text x="174.60" y="416.55" font-size="10.5" fill="#222" textLength="62.10" lengthAdjust="spacingAndGlyphs">4,980,000.00</text>
<text x="277.50" y="416.55" font-size="10.5" fill="#222" textLength="25.80" lengthAdjust="spacingAndGlyphs">116%</text>
<text x="104.30" y="433.24" font-size="10.5" fill="#222" font-weight="bold" textLength="23.00" lengthAdjust="spacingAndGlyphs">2019</text>
<text x="174.60" y="433.24" font-size="10.5" fill="#222" textLength="62.10" lengthAdjust="spacingAndGlyphs">5,100,000.00</text>
<text x="277.50" y="433.24" font-size="10.5" fill="#222" textLength="25.80" lengthAdjust="spacingAndGlyphs">119%</text>
<text x="104.30" y="449.93" font-size="10.5" fill="#222" font-weight="bold" textLength="23.00" lengthAdjust="spacingAndGlyphs">2020</text>
<text x="174.60" y="449.93" font-size="10.5" fill="#222" textLength="62.10" lengthAdjust="spacingAndGlyphs">5,200,000.00</text>
<text x="277.50" y="449.93" font-size="10.5" fill="#222" textLength="25.80" lengthAdjust="spacingAndGlyphs">121%</text>
<text x="82.00" y="483.31" font-size="10.5" fill="#222" font-weight="bold" textLength="68.00" lengthAdjust="spacingAndGlyphs">Costo Ventas</text>
<text x="341.40" y="500.00" font-size="10.5" fill="#222" font-weight="bold" textLength="52.80" lengthAdjust="spacingAndGlyphs">Tendencia</text>
<text x="180.00" y="516.69" font-size="10.5" fill="#222" font-weight="bold" textLength="51.30" lengthAdjust="spacingAndGlyphs">Absolutos</text>
<text x="266.40" y="516.69" font-size="10.5" fill="#222" font-weight="bold" textLength="47.20" lengthAdjust="spacingAndGlyphs">Relativos</text>
<text x="347.80" y="516.69" font-size="10.5" fill="#222" font-weight="bold" textLength="40.80" lengthAdjust="spacingAndGlyphs">Relativa</text>
<text x="106.00" y="533.38" font-size="10.5" fill="#222" font-weight="bold" textLength="20.50" lengthAdjust="spacingAndGlyphs">Año</text>
<text x="204.00" y="533.38" font-size="10.5" fill="#222" font-weight="bold" textLength="5.50" lengthAdjust="spacingAndGlyphs">$</text>
<text x="285.80" y="533.38" font-size="10.5" fill="#222" font-weight="bold" textLength="8.90" lengthAdjust="spacingAndGlyphs">%</text>
<text x="367.50" y="533.38" font-size="10.5" fill="#222" font-weight="bold" textLength="8.90" lengthAdjust="spacingAndGlyphs">%</text>
<rect x="475.00" y="304.20" width="532.60" height="240.00" fill="#ffffff" stroke="#a9a9a9" stroke-width="1.1"/>
<text x="538.40" y="331.40" font-size="17" fill="#222" font-weight="bold" textLength="404.90" lengthAdjust="spacingAndGlyphs">Comparativo Tendencia Ventas y Costo de Ventas</text>
<line x1="517.00" y1="350.50" x2="995.00" y2="350.50" stroke="#bcbcbc" stroke-width="1" />
<text x="506.00" y="354.00" font-size="9.5" fill="#444" text-anchor="end">120%</text>
<line x1="517.00" y1="386.50" x2="995.00" y2="386.50" stroke="#bcbcbc" stroke-width="1" />
<text x="506.00" y="390.00" font-size="9.5" fill="#444" text-anchor="end">100%</text>
<line x1="517.00" y1="422.50" x2="995.00" y2="422.50" stroke="#bcbcbc" stroke-width="1" />
<text x="506.00" y="426.00" font-size="9.5" fill="#444" text-anchor="end">80%</text>
<line x1="517.00" y1="458.50" x2="995.00" y2="458.50" stroke="#bcbcbc" stroke-width="1" />
<text x="506.00" y="462.00" font-size="9.5" fill="#444" text-anchor="end">60%</text>
<line x1="517.00" y1="494.50" x2="995.00" y2="494.50" stroke="#bcbcbc" stroke-width="1" />
<text x="506.00" y="498.00" font-size="9.5" fill="#444" text-anchor="end">40%</text>
<line x1="517.00" y1="530.50" x2="995.00" y2="530.50" stroke="#bcbcbc" stroke-width="1" />
<text x="506.00" y="534.00" font-size="9.5" fill="#444" text-anchor="end">20%</text>
<rect x="0.00" y="533.20" width="1024.00" height="23.00" fill="#e7e7e7" />
<line x1="0.00" y1="533.30" x2="1024.00" y2="533.30" stroke="#c2c2c2" stroke-width="1" />
<line x1="0.00" y1="556.00" x2="1024.00" y2="556.00" stroke="#d8d8d8" stroke-width="0.8" />
<circle cx="11.5" cy="546.7" r="0.9" fill="#555"/>
<circle cx="15" cy="546.7" r="0.9" fill="#555"/>
<circle cx="18.5" cy="546.7" r="0.9" fill="#555"/>
<line x1="27.20" y1="536.00" x2="27.20" y2="552.40" stroke="#b8b8b8" stroke-width="1" />
<text x="42.50" y="548.30" font-size="10.5" fill="#5a5a5a" textLength="134.80" lengthAdjust="spacingAndGlyphs">Aumentos y Disminuaciones</text>
<line x1="193.40" y1="536.00" x2="193.40" y2="552.40" stroke="#b8b8b8" stroke-width="1" />
<text x="206.00" y="548.30" font-size="10.5" fill="#5a5a5a" textLength="97.00" lengthAdjust="spacingAndGlyphs">Razones Financieras</text>
<line x1="316.00" y1="536.00" x2="316.00" y2="552.40" stroke="#b8b8b8" stroke-width="1" />
<text x="330.00" y="548.30" font-size="10.5" fill="#5a5a5a" textLength="134.80" lengthAdjust="spacingAndGlyphs">Análisis Piramidal DU-PONT</text>
<rect x="481.40" y="532.00" width="76.80" height="21.50" fill="#ffffff" />
<line x1="481.40" y1="552.80" x2="558.20" y2="552.80" stroke="#217346" stroke-width="2" />
<text x="492.00" y="548.50" font-size="10.5" fill="#217346" font-weight="bold" textLength="56.00" lengthAdjust="spacingAndGlyphs">Tendencias</text>
<circle cx="592.5" cy="544.8" r="6" fill="none" stroke="#777" stroke-width="1"/>
<line x1="589.00" y1="544.80" x2="596.00" y2="544.80" stroke="#777" stroke-width="1.2" />
<line x1="592.50" y1="541.30" x2="592.50" y2="548.30" stroke="#777" stroke-width="1.2" />
<circle cx="625.5" cy="541" r="0.7" fill="#999"/>
<circle cx="625.5" cy="544.5" r="0.7" fill="#999"/>
<circle cx="625.5" cy="548" r="0.7" fill="#999"/>
<rect x="639.70" y="538.90" width="400.00" height="11.50" fill="#ffffff" stroke="#c2c2c2" stroke-width="0.9"/>
<line x1="652.30" y1="538.90" x2="652.30" y2="550.40" stroke="#c6c6c6" stroke-width="0.8" />
<path d="M647.5 541.8 v5.8 l-3.4 -2.9z" fill="#444"/>
<rect x="0.00" y="556.40" width="1024.00" height="18.00" fill="#f1f1f1" />
<rect x="843.20" y="556.40" width="30.30" height="17.30" fill="#cfcfcf" />
<rect x="852.3" y="560" width="11.2" height="10.6" fill="none" stroke="#555" stroke-width="1"/>
<line x1="856.00" y1="560.00" x2="856.00" y2="570.60" stroke="#555" stroke-width="0.9" />
<line x1="859.80" y1="560.00" x2="859.80" y2="570.60" stroke="#555" stroke-width="0.9" />
<line x1="852.30" y1="563.50" x2="863.50" y2="563.50" stroke="#555" stroke-width="0.9" />
<line x1="852.30" y1="567.10" x2="863.50" y2="567.10" stroke="#555" stroke-width="0.9" />
<rect x="884.5" y="560" width="10" height="10.6" fill="none" stroke="#666" stroke-width="0.9"/>
<rect x="0.00" y="574.20" width="1024.00" height="1.80" fill="#141414" />
<defs>
<filter id="bl" x="-10%" y="-10%" width="120%" height="120%"><feGaussianBlur stdDeviation="1.3"/></filter>
<clipPath id="wc"><rect x="894.6" y="471.7" width="130" height="102.6"/></clipPath>
<pattern id="chk" width="4.5" height="4.5" patternUnits="userSpaceOnUse"><rect width="4.5" height="4.5" fill="#e2a8cf"/><rect width="2" height="4.5" fill="#c27aae"/><rect width="4.5" height="1.6" fill="#f0d2e6"/></pattern>
</defs>
<g clip-path="url(#wc)"><g filter="url(#bl)">
<rect x="888" y="465" width="145" height="115" fill="#b06a36"/>
<rect x="888" y="465" width="18" height="115" fill="#cdcdcd"/>
<rect x="906" y="465" width="78" height="33" fill="#b0662f"/>
<rect x="911.5" y="468" width="25.8" height="29.6" fill="#8e8a86"/>
<rect x="914" y="470" width="5" height="25" fill="#a8a49c"/>
<rect x="920" y="470" width="3" height="25" fill="#6f8cb0"/>
<rect x="925" y="472" width="10" height="23" fill="#b4b0a6"/>
<rect x="946.5" y="468" width="30" height="29" fill="#7c7a78"/>
<rect x="947.5" y="470" width="27" height="20" fill="#dfe2de"/>
<rect x="952" y="480" width="14" height="3" fill="#7c98b0"/>
<rect x="906" y="497.6" width="78" height="8.5" fill="#b26c38"/>
<rect x="906" y="506" width="9" height="50" fill="#86461f"/>
<rect x="915" y="506" width="39" height="40" fill="#c9c8cb"/>
<rect x="954" y="506" width="20" height="30" fill="#b2642f"/>
<rect x="958" y="510" width="14" height="23" fill="#a4582a"/>
<rect x="974" y="506" width="11" height="30" fill="#d6a486"/>
<path d="M915.5 547 l2.5 -31 l2.5 0 l1.5 31z" fill="#e4dcc0"/>
<path d="M929 547 v-16 q-2.5 -8 3.7 -13 q6 5 3.7 13 v16z" fill="#8c8a80"/>
<ellipse cx="902.5" cy="545" rx="6" ry="7" fill="#b8ae98"/>
<rect x="909" y="538" width="9" height="14" fill="#4a3c34"/>
<rect x="918" y="540" width="10" height="12" fill="#e6e4e4"/>
<rect x="928" y="541" width="8" height="11" fill="#3c3638"/>
<rect x="936" y="540" width="10" height="11" fill="#c8d4dc"/>
<rect x="946" y="536" width="8" height="12" fill="#5a4458"/>
<rect x="954" y="535.4" width="21" height="8.5" fill="#90d070"/>
<rect x="940" y="544" width="16" height="9" fill="#88c4bc"/>
<rect x="894" y="553" width="70" height="12" fill="#6e4c3c"/>
<path d="M928 580 L940 560 Q952 547 966 541 Q976 535 986 531 L990 555 L1030 553 V580z" fill="url(#chk)"/>
<path d="M984 556 Q982 530 985 505 Q990 487 1006 484 L1030 483 V556z" fill="#c89c8c"/>
<path d="M988 548 Q1002 560 1030 556 V566 H990z" fill="#9e7466"/>
<path d="M1000 556 Q1015 565 1030 560 V580 H1000z" fill="url(#chk)"/>
<path d="M980 507 Q978 484 992 474 Q1008 466 1030 468 V486 Q1010 484 998 490 Q988 496 985 510 L984 523 Q980 518 980 507z" fill="#28231f"/>
<path d="M985.5 504.5 h40 v2.4 h-40z" fill="#2c2628"/>
<rect x="986.5" y="505" width="23" height="14" rx="3.5" fill="#6c6486" stroke="#2e2830" stroke-width="1.8"/>
<rect x="1015.5" y="505" width="14" height="14" rx="3.5" fill="#6c6486" stroke="#2e2830" stroke-width="1.8"/>
<rect x="989" y="506.5" width="18" height="4" fill="#9a90c0"/>
<path d="M1004 535 q8 2.5 16 0" stroke="#9a6a62" stroke-width="1.6" fill="none"/>
</g>
<rect x="894.6" y="562.8" width="130" height="11.5" fill="#333" opacity="0.82"/>
</g>
<text x="897.00" y="572.50" font-size="10.5" fill="#f0f0f0" textLength="127.00" lengthAdjust="spacingAndGlyphs">Gustavo Alberto Barredo I</text>
</svg>
</body></html>
